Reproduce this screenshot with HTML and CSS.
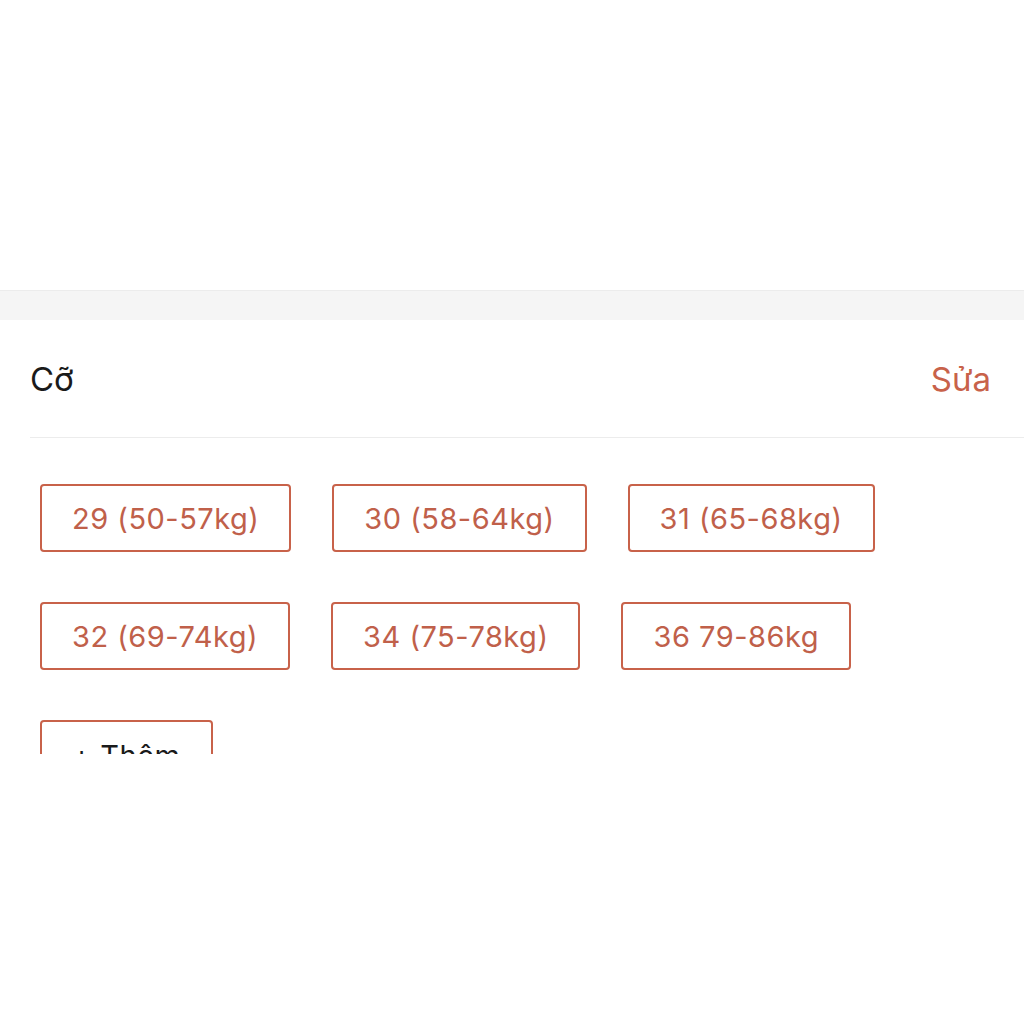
FILE: index.html
```html
<!DOCTYPE html>
<html lang="vi">
<head>
<meta charset="utf-8">
<link rel="stylesheet" href="styles.css">
</head>
<body>
<div class="top"></div>
<div class="band"></div>
<section class="panel">
  <div class="head">
    <span class="title">Cỡ</span>
    <span class="edit">Sửa</span>
  </div>
  <div class="sizes">
    <span class="chip">29 (50-57kg)</span>
    <span class="chip">30 (58-64kg)</span>
    <span class="chip">31 (65-68kg)</span>
    <span class="chip">32 (69-74kg)</span>
    <span class="chip">34 (75-78kg)</span>
    <span class="chip">36 79-86kg</span>
    <span class="chip add">+ Thêm</span>
  </div>
</section>
</body>
</html>
```
FILE: styles.css
```css
html, body { margin: 0; padding: 0; background: #fff; }
body { font-family: Inter, "Liberation Sans", sans-serif; width: 1024px; height: 1024px; overflow: hidden; }
.top { height: 290px; background: #fff; }
.band { height: 29px; background: #f5f5f5; border-top: 1px solid #ececec; }
.panel { height: 434px; overflow: hidden; background: #fff; }
.head { margin-left: 30px; height: 117px; border-bottom: 1px solid #ececec; display: flex; align-items: center; justify-content: space-between; padding-right: 33px; }
.title { font-size: 33px; color: #1a1a1a; }
.edit { font-size: 33px; color: #c8624a; }
.sizes { display: flex; flex-wrap: wrap; column-gap: 41px; row-gap: 50px; padding: 46px 0 0 40px; width: 900px; }
.chip { box-sizing: border-box; height: 68px; border: 2px solid #c8624a; border-radius: 4px; padding: 0 30px; display: flex; align-items: center; font-size: 29px; letter-spacing: 0.5px; color: #c0604a; }
.chip.add { color: #1a1a1a; align-items: flex-start; padding-top: 16px; }
```
